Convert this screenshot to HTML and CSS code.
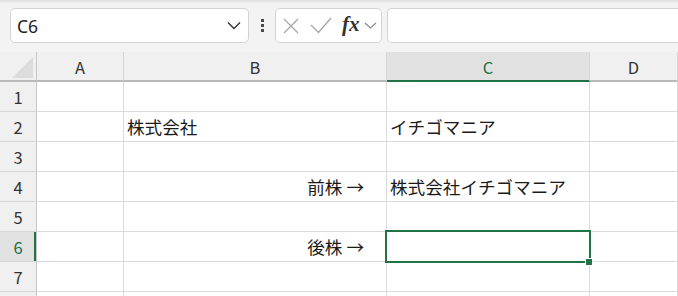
FILE: index.html
```html
<!DOCTYPE html>
<html lang="ja">
<head>
<meta charset="utf-8">
<link rel="stylesheet" href="styles.css">
</head>
<body>
<div class="toolbar">
  <div class="namebox">
    <span class="ref">C6</span>
    <svg class="nb-chev" width="14" height="9" viewBox="0 0 14 9"><path d="M1 1.5 L7 7.5 L13 1.5" fill="none" stroke="#333" stroke-width="1.4"/></svg>
  </div>
  <div class="kebab"><i></i><i></i><i></i></div>
  <div class="fxbox">
    <svg class="ico-x" width="16" height="16" viewBox="0 0 16 16"><path d="M1 1 L15 15 M15 1 L1 15" stroke="#a6a6a6" stroke-width="1.3" fill="none"/></svg>
    <svg class="ico-ok" width="22" height="17" viewBox="0 0 22 17"><path d="M1 8 L8.5 15.5 L21 1" stroke="#a6a6a6" stroke-width="1.3" fill="none"/></svg>
    <span class="fx">fx</span>
    <svg class="ico-chev" width="13" height="7" viewBox="0 0 13 7"><path d="M1 1 L6.5 6 L12 1" stroke="#8a8a8a" stroke-width="1.2" fill="none"/></svg>
  </div>
  <div class="formula"></div>
</div>
<div class="sheet">
  <div class="corner"><span class="tri"></span></div>
  <div class="colh">A</div>
  <div class="colh">B</div>
  <div class="colh sel">C</div>
  <div class="colh">D</div>

  <div class="rowh">1</div><div class="cell"></div><div class="cell"></div><div class="cell"></div><div class="cell"></div>
  <div class="rowh">2</div><div class="cell"></div><div class="cell">株式会社</div><div class="cell">イチゴマニア</div><div class="cell"></div>
  <div class="rowh">3</div><div class="cell"></div><div class="cell"></div><div class="cell"></div><div class="cell"></div>
  <div class="rowh">4</div><div class="cell"></div><div class="cell right">前株 →</div><div class="cell">株式会社イチゴマニア</div><div class="cell"></div>
  <div class="rowh">5</div><div class="cell"></div><div class="cell"></div><div class="cell"></div><div class="cell"></div>
  <div class="rowh sel">6</div><div class="cell"></div><div class="cell right">後株 →</div><div class="cell active"><span class="cursor"><span class="handle"></span></span></div><div class="cell"></div>
  <div class="rowh">7</div><div class="cell"></div><div class="cell"></div><div class="cell"></div><div class="cell"></div>
  <div class="rowh"></div><div class="cell"></div><div class="cell"></div><div class="cell"></div><div class="cell"></div>
</div>
</body>
</html>
```
FILE: styles.css
```css
html, body {
  margin: 0;
  padding: 0;
  width: 678px;
  height: 296px;
  overflow: hidden;
  background: #f3f3f3;
  font-family: "Noto Sans CJK JP", "Noto Sans", sans-serif;
}

.toolbar {
  height: 52px;
  box-sizing: border-box;
  padding: 8px 0 0 10px;
  display: flex;
  align-items: flex-start;
  background: linear-gradient(#dedede 0, #ebebeb 2px, #f3f3f3 4px);
  white-space: nowrap;
}

.namebox {
  width: 239px;
  height: 35px;
  box-sizing: border-box;
  background: #fff;
  border: 1px solid #d3d3d3;
  border-radius: 5px;
  display: flex;
  align-items: center;
  padding: 0 7px 0 6px;
}
.ref {
  flex: 1;
  font-family: "Noto Sans", sans-serif;
  font-size: 17.5px;
  color: #222;
}
.nb-chev { display: block; }

.kebab {
  width: 26px;
  height: 35px;
  display: flex;
  flex-direction: column;
  align-items: center;
  justify-content: center;
  gap: 2px;
}
.kebab i {
  width: 3px;
  height: 3px;
  background: #4a4a4a;
  display: block;
}

.fxbox {
  width: 107px;
  height: 35px;
  box-sizing: border-box;
  background: #fff;
  border: 1px solid #d3d3d3;
  border-radius: 5px;
  display: flex;
  align-items: center;
  padding-left: 7px;
}
.ico-x { display: block; margin-right: 11px; }
.ico-ok { display: block; margin-right: 10px; }
.fx {
  font-family: "Liberation Serif", serif;
  font-style: italic;
  font-weight: bold;
  font-size: 21px;
  color: #333;
  line-height: 1;
  margin-top: -2px;
  margin-right: 4px;
}
.ico-chev { display: block; }

.formula {
  margin-left: 5px;
  flex: 1;
  height: 35px;
  box-sizing: border-box;
  background: #fff;
  border: 1px solid #d3d3d3;
  border-right: none;
  border-radius: 5px 0 0 5px;
}

.sheet {
  display: grid;
  grid-template-columns: 37px 87px 263px 203px 88px;
  grid-template-rows: repeat(9, 30px);
  background: #fff;
}

.corner {
  background: #f0f0f0;
  border-right: 1px solid #c8c8c8;
  border-bottom: 2px solid #b9b9b9;
  box-sizing: border-box;
  position: relative;
}
.tri {
  position: absolute;
  left: 12px;
  top: 5px;
  width: 0;
  height: 0;
  border-left: 21px solid transparent;
  border-bottom: 21px solid #dcdcdc;
}

.colh {
  background: #f0f0f0;
  border-right: 1px solid #d6d6d6;
  border-bottom: 2px solid #b9b9b9;
  box-sizing: border-box;
  display: flex;
  align-items: center;
  justify-content: center;
  font-size: 16.5px;
  color: #333;
  padding-top: 1px;
}
.colh.sel {
  background: #e1e1e1;
  border-bottom-color: #217346;
  color: #1d6b45;
}

.rowh {
  background: #f0f0f0;
  border-right: 1px solid #c8c8c8;
  border-bottom: 1px solid #d6d6d6;
  box-sizing: border-box;
  display: flex;
  align-items: center;
  justify-content: center;
  font-size: 16.5px;
  color: #333;
}
.rowh.sel {
  background: #e1e1e1;
  color: #1d6b45;
  box-shadow: inset -2px 0 0 #217346;
}

.cell {
  border-right: 1px solid #dadada;
  border-bottom: 1px solid #dadada;
  box-sizing: border-box;
  display: flex;
  align-items: center;
  padding: 0 3px;
  font-size: 17.6px;
  color: #1a1a1a;
  white-space: nowrap;
  position: relative;
}
.cell.active { z-index: 2; }
.cell.right {
  justify-content: flex-end;
  padding-right: 22px;
}
.cursor {
  position: absolute;
  left: -2px;
  top: -2px;
  right: -2px;
  bottom: -2px;
  border: 2px solid #217346;
}
.handle {
  position: absolute;
  right: -3px;
  bottom: -4px;
  width: 6px;
  height: 6px;
  background: #217346;
  box-shadow: 0 0 0 1px #fff;
}
```
